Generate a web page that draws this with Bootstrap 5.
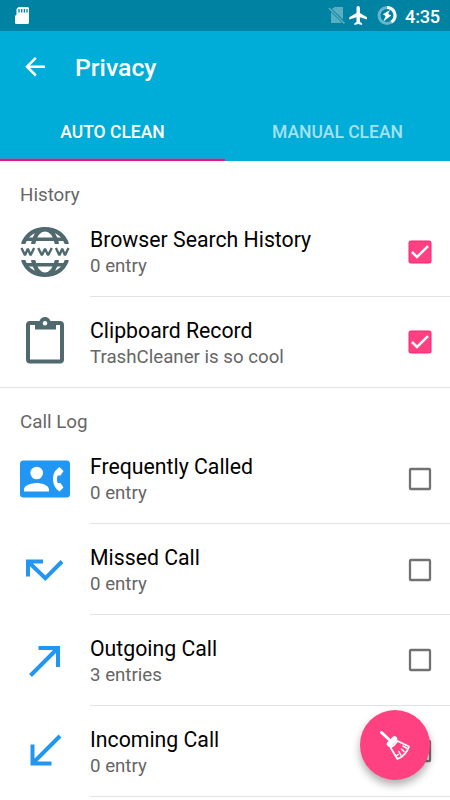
<!DOCTYPE html>
<html lang="en">
<head>
<meta charset="utf-8">
<meta name="viewport" content="width=device-width, initial-scale=1">
<title>Privacy</title>
<link href="https://cdn.jsdelivr.net/npm/bootstrap@5.3.0/dist/css/bootstrap.min.css" rel="stylesheet">
<style>
body{font-family:Roboto,"Liberation Sans",sans-serif;color:#000;background:#fff;height:800px;overflow:hidden}
svg{display:block;flex:none}
.statusbar{height:31px;background:#0083a3;padding:0 10px 0 14px;color:#fff}
.clock{font-size:18.2px;font-weight:500;line-height:31px;margin-left:7px;width:35px;white-space:nowrap;padding-top:1px;letter-spacing:-.2px}
.appbar{background:#00add9;color:#fff}
.toolbar{height:73px;padding-left:24px}
.title{font-size:24.8px;font-weight:500;line-height:30px;margin-left:29px}
.tabs{height:57px}
.tab-item{font-size:17.5px;font-weight:500;color:#a6e1f1;padding-top:2px;border-bottom:2px solid transparent}
.tab-item.active{color:#fff;border-bottom-color:#f00f87;box-shadow:inset 0 -1px #5a87b8}
.section-title{height:45.4px;font-size:18.8px;color:#666;padding:11px 20px 0;line-height:46px;white-space:nowrap}
.entry{height:90.8px;padding-left:20px}
.entry-main{margin-left:20px;padding-right:18px;border-bottom:1px solid #e2e2e2}
.section-end{border-bottom:1px solid #e2e2e2}
.section-end .entry-main{border-bottom-color:transparent}
.name{font-size:21.25px;line-height:27px;padding-top:4.6px}
.sub{font-size:18.7px;line-height:27.4px;color:#666}
.check{margin-top:1px}
.fab{right:20px;bottom:20px;width:70px;height:70px;background:#ff4081;box-shadow:0 5px 8px rgba(0,0,0,.32)}
</style>
</head>
<body>
<svg class="d-none">
<symbol id="on" viewBox="0 0 24 24"><rect x="1" y="1" width="22" height="22" rx="1.5" fill="#ff4081" stroke="#ff2078"/><path d="M4 12l5 5L20 6.2" fill="none" stroke="#fff" stroke-width="2.5"/></symbol>
<symbol id="off" viewBox="0 0 24 24"><rect x="2" y="2" width="20" height="20" rx=".8" fill="none" stroke="#727272" stroke-width="2.3"/></symbol>
</svg>
<div class="statusbar d-flex align-items-center">
  <svg width="16" height="31" viewBox="0 0 16 31"><path d="M4.500 7H13.500Q15 7 15 8.500V22.500Q15 24 13.500 24H2.500Q1 24 1 22.500V16L2.500 14.500V9Z" fill="#fff"/><path d="M5 9v3.500M7.700 9v3.500M10.400 9v3.500M13 9v3.500" stroke="#0083a3" stroke-width="1.300"/></svg>
  <svg class="ms-auto" width="70" height="31" viewBox="328 0 70 31"><path d="M334.500 7h8.500v12.500L332 9zM331 12v11h11z" fill="#5aaec2"/><path d="M329 8l15.500 15.500" stroke="#5aaec2" stroke-width="1.500"/>
  <path d="M358.200 6c1.200 0 1.700 1 1.700 2v5l7.100 4.300v2.200l-7.100-2.300v4.500l2.200 1.700v1.500l-3.900-1-3.900 1v-1.500l2.200-1.700v-4.500l-7.200 2.300v-2.200l7.200-4.300V8c0-1 .5-2 1.700-2z" fill="#fff"/>
  <circle cx="387" cy="15.500" r="8" fill="none" stroke="#66b5c8" stroke-width="3"/><path d="M387 7.500a8 8 0 0 1 4.500 14.600" fill="none" stroke="#fff" stroke-width="3"/><path d="M390 10l-7.200 4.200 2.800 1.800-2.200 5.500 7.800-6-3-1.500z" fill="#fff"/></svg>
  <span class="clock">4:35</span>
</div>
<header class="appbar">
  <div class="toolbar d-flex align-items-center">
    <svg width="22" height="22" viewBox="0 0 22 22"><path d="M21 9.700H3M11.800 .9L3 9.700l8.800 8.800" fill="none" stroke="#fff" stroke-width="2.500"/></svg>
    <span class="title">Privacy</span>
  </div>
  <nav class="tabs d-flex">
    <div class="tab-item active w-50 d-flex align-items-center justify-content-center">AUTO CLEAN</div>
    <div class="tab-item w-50 d-flex align-items-center justify-content-center">MANUAL CLEAN</div>
  </nav>
</header>
<main>
  <div class="section-title">History</div>
  <div class="entry d-flex align-items-center">
    <svg width="50" height="50" viewBox="0 0 50 50"><defs><g id="cap"><path d="M3 17.200C6.500 7 15 2.100 25 2.100S43.500 7 47 17.200M13 17.200C15 8 19.500 2.500 25 2.500S35 8 37 17.200" fill="none" stroke="#50696f" stroke-width="4.200"/><path d="M6 12.300h38" stroke="#50696f" stroke-width="3.500"/></g><clipPath id="band"><path d="M0 0h50v17H0z"/></clipPath></defs><use href="#cap" clip-path="url(#band)"/><use href="#cap" clip-path="url(#band)" transform="matrix(1 0 0 -1 0 50)"/><path d="M1.500 21l3.500 7.200L7.800 21.800 10.600 28.200 14.100 21M18.200 21l3.700 7.200L25 21.800 28.100 28.200 31.800 21M35.900 21l3.500 7.200L42.200 21.800 45 28.200 48.500 21" fill="none" stroke="#50696f" stroke-width="2.400" stroke-linejoin="bevel"/></svg>
    <div class="entry-main flex-grow-1 h-100 d-flex align-items-center justify-content-between"><div><div class="name">Browser Search History</div><div class="sub">0 entry</div></div><svg class="check" width="24" height="24"><use href="#on"/></svg></div>
  </div>
  <div class="entry section-end d-flex align-items-center">
    <svg width="50" height="50" viewBox="0 0 50 50"><rect x="8" y="6" width="34" height="38.500" rx="2" fill="none" stroke="#50696f" stroke-width="4"/><path fill="#50696f" d="M15 12.500V4h4.500C20.500 1.500 22.500 0 25 0s4.500 1.500 5.500 4H36v8.500z"/><circle cx="25" cy="6.200" r="2.200" fill="#fff"/></svg>
    <div class="entry-main flex-grow-1 h-100 d-flex align-items-center justify-content-between"><div><div class="name">Clipboard Record</div><div class="sub">TrashCleaner is so cool</div></div><svg class="check" width="24" height="24"><use href="#on"/></svg></div>
  </div>
  <div class="section-title">Call Log</div>
  <div class="entry d-flex align-items-center">
    <svg width="50" height="50" viewBox="0 0 50 50"><rect y="6.500" width="50" height="37" rx="3.500" fill="#2196f3"/><g fill="#fff"><circle cx="16.700" cy="19" r="6.300"/><path d="M4 37.500v-2C4 31 12.500 29 16.700 29S29 31 29 35.500v2zM39.500 13l4 4-3 4.500h-3q-1.300 4 0 7.500h3l3 4.500-4 4C35 34.500 33 30 33 25s2-9 6.500-12z"/></g></svg>
    <div class="entry-main flex-grow-1 h-100 d-flex align-items-center justify-content-between"><div><div class="name">Frequently Called</div><div class="sub">0 entry</div></div><svg class="check" width="24" height="24"><use href="#off"/></svg></div>
  </div>
  <div class="entry d-flex align-items-center">
    <svg width="50" height="50" viewBox="0 0 50 50"><path d="M8 31.500V16.500H23M8 16.500L25.300 33.300 42 16.500" fill="none" stroke="#2196f3" stroke-width="4"/></svg>
    <div class="entry-main flex-grow-1 h-100 d-flex align-items-center justify-content-between"><div><div class="name">Missed Call</div><div class="sub">0 entry</div></div><svg class="check" width="24" height="24"><use href="#off"/></svg></div>
  </div>
  <div class="entry d-flex align-items-center">
    <svg width="50" height="50" viewBox="0 0 50 50"><path d="M18.500 13H38V32M38 13L10.500 40.500" fill="none" stroke="#2196f3" stroke-width="4"/></svg>
    <div class="entry-main flex-grow-1 h-100 d-flex align-items-center justify-content-between"><div><div class="name">Outgoing Call</div><div class="sub">3 entries</div></div><svg class="check" width="24" height="24"><use href="#off"/></svg></div>
  </div>
  <div class="entry d-flex align-items-center">
    <svg width="50" height="50" viewBox="0 0 50 50"><path d="M31.500 37.500H12.500V18.500M12.500 37.500L40 10" fill="none" stroke="#2196f3" stroke-width="4"/></svg>
    <div class="entry-main flex-grow-1 h-100 d-flex align-items-center justify-content-between"><div><div class="name">Incoming Call</div><div class="sub">0 entry</div></div><svg class="check" width="24" height="24"><use href="#off"/></svg></div>
  </div>
</main>
<button class="fab position-fixed rounded-circle border-0 p-0" aria-label="Clean">
  <svg width="70" height="70" viewBox="0 0 70 70"><g fill="none" stroke="#fff" stroke-linecap="round" stroke-linejoin="round"><path d="M21.500 22.500l7.500 7" stroke-width="3"/><path d="M29.500 34l5-5" stroke-width="5.500"/><path d="M30.500 37.500q4-2 7-6.500l11.500 5.500c-1.500 5-6 10.500-11.500 12.500z" stroke-width="1.800"/><path d="M36 46l2.200-1.500M38.800 41.500l2 3.500M41.500 39l2.500 2.500M43 36l3.500 2" stroke-width="1.500"/></g></svg>
</button>
<script src="https://cdn.jsdelivr.net/npm/bootstrap@5.3.0/dist/js/bootstrap.bundle.min.js"></script>
</body>
</html>
